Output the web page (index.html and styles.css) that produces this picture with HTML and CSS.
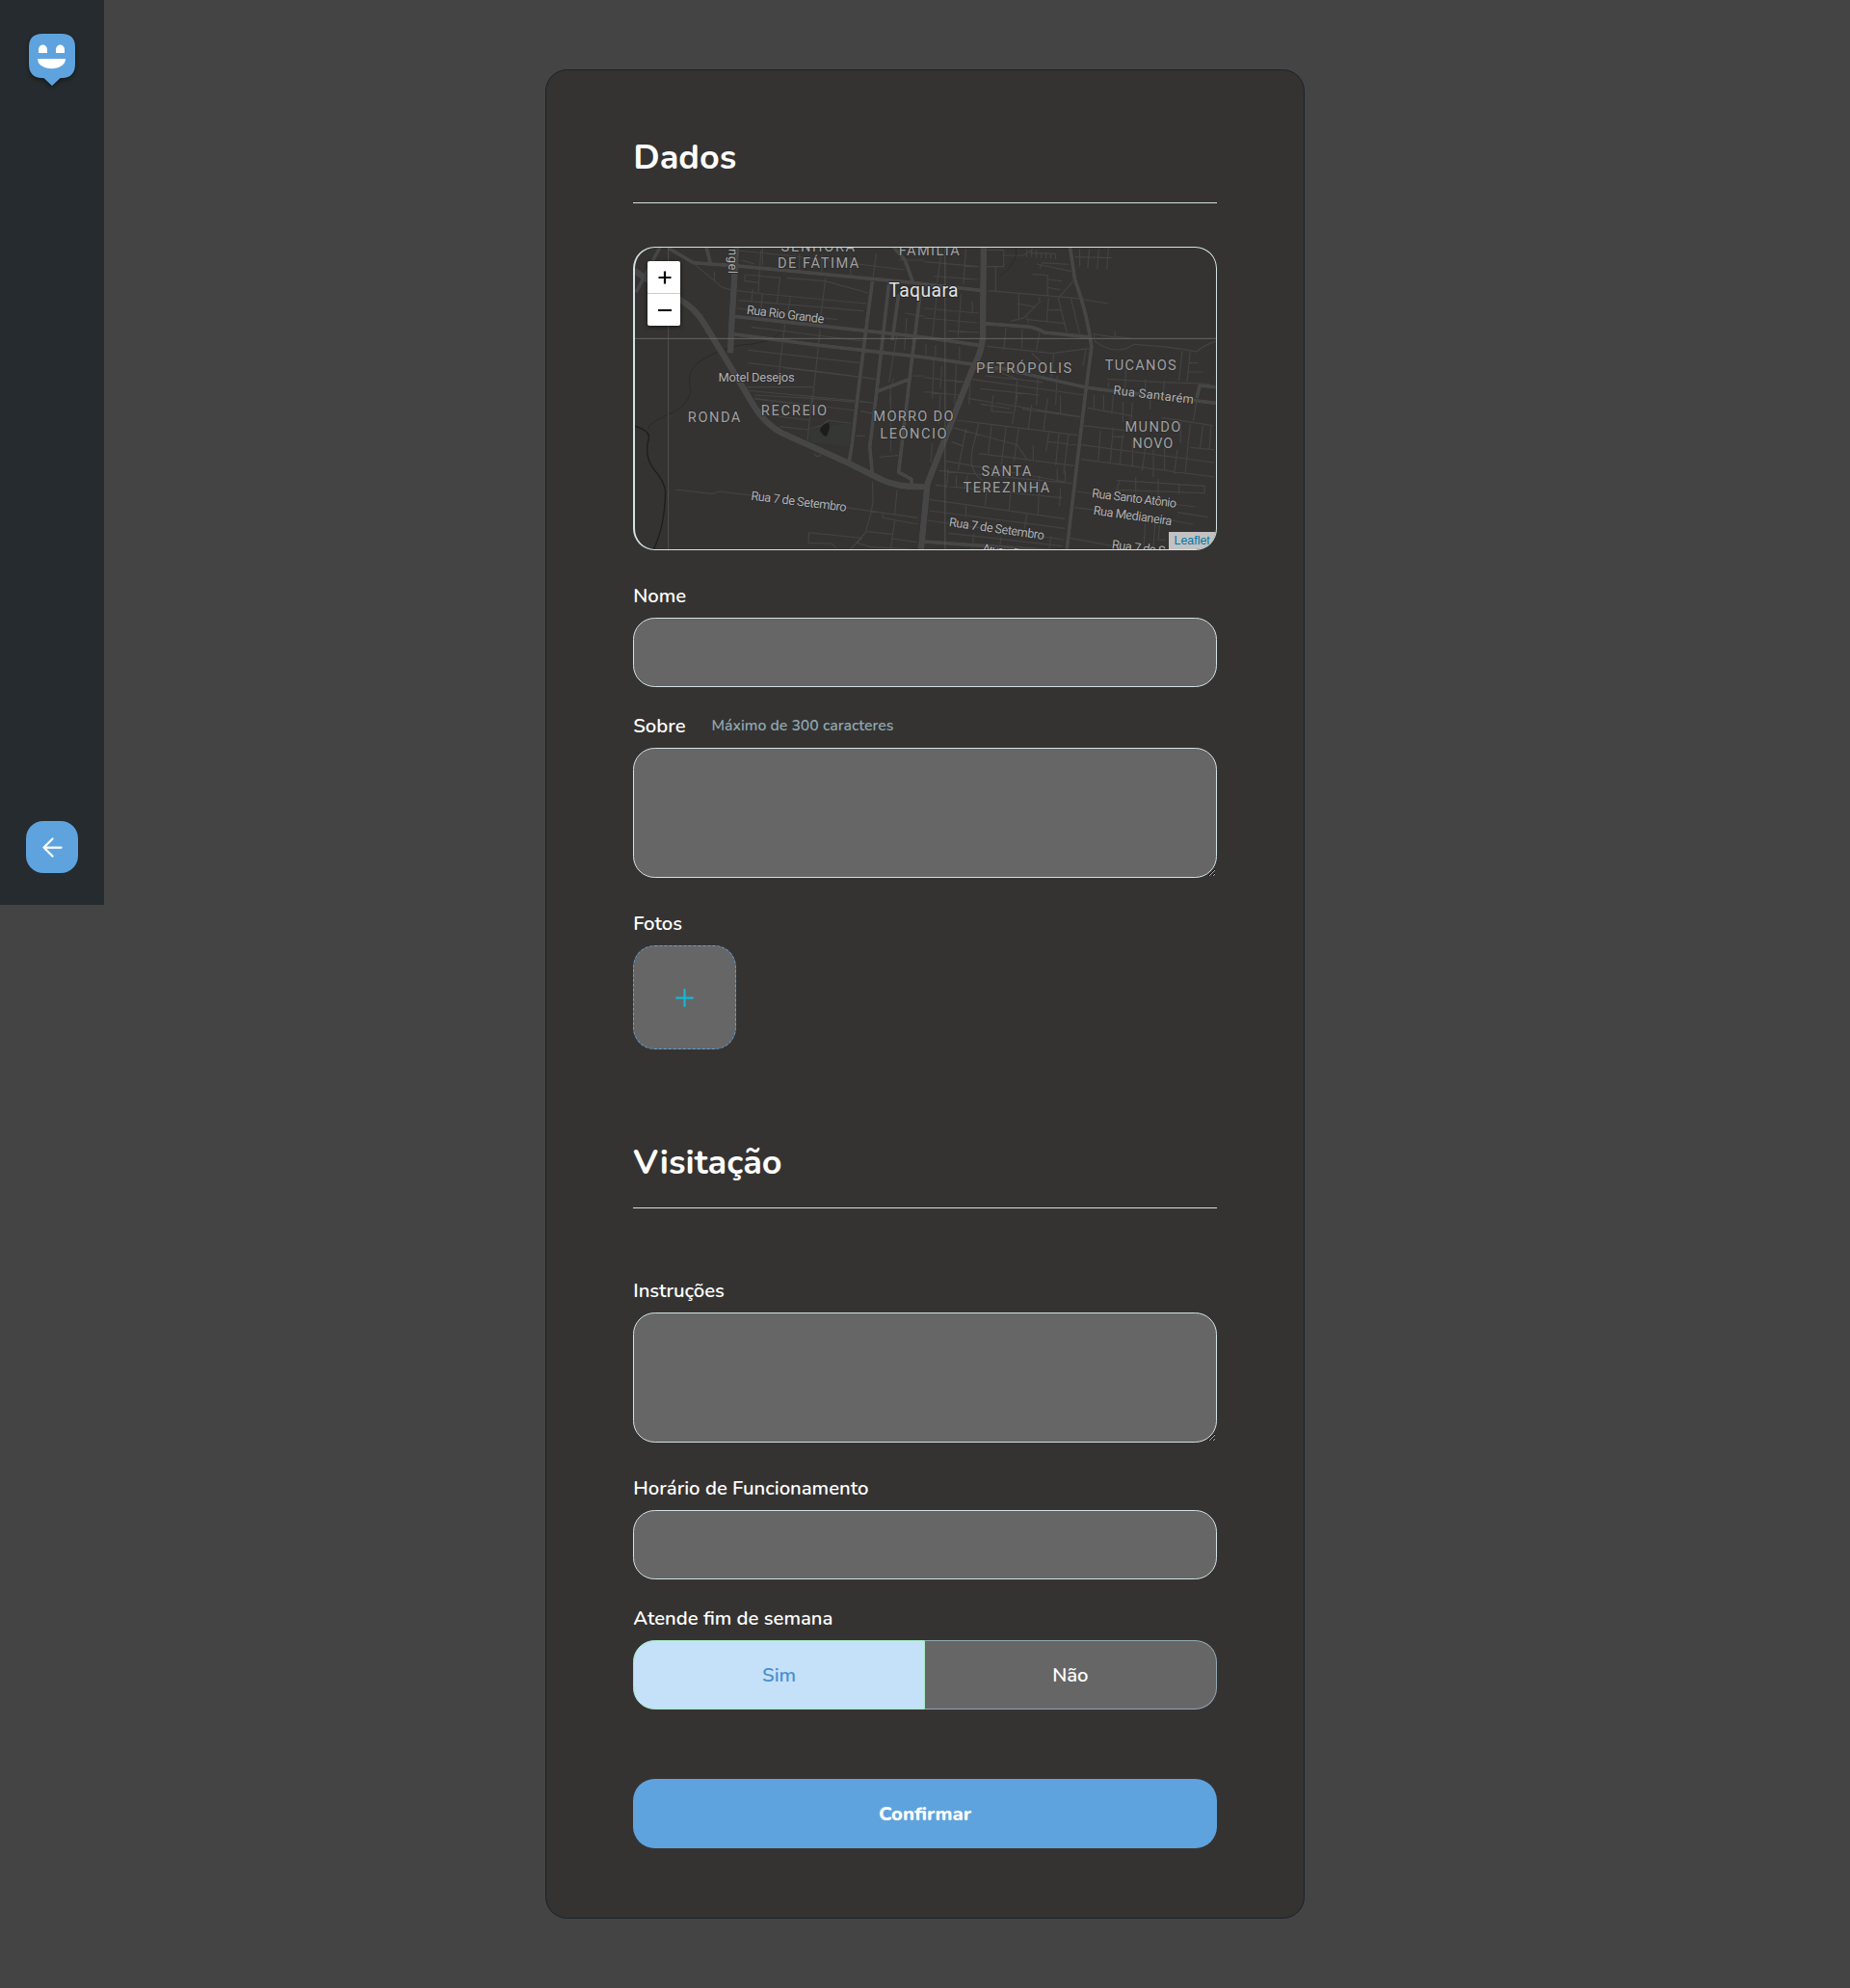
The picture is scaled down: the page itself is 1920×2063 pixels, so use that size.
FILE: index.html
```html
<!DOCTYPE html>
<html lang="pt-BR">
<head>
<meta charset="utf-8">
<title>Dados</title>
<link rel="stylesheet" href="styles.css">
</head>
<body>
<aside class="sidebar">
  <svg class="logo" width="60" height="66" viewBox="0 0 60 66">
    <path d="M20 5H40Q54 5 54 19V36Q54 51 40 51H38.500L30 59L21.500 51H20Q6 51 6 36V19Q6 5 20 5Z" fill="#5fa3de"/>
    <path d="M16 25V21.500a4.500 5 0 0 1 9 0V25ZM34 25V21.500a4.500 5 0 0 1 9 0V25Z" fill="#fff"/>
    <path d="M15 31H44C44 44.500 15 44.500 15 31Z" fill="#fff"/>
  </svg>
  <button class="back" type="button" aria-label="Voltar">
    <svg width="27" height="27" viewBox="0 0 24 24" fill="none" stroke="#fff" stroke-width="2" stroke-linecap="round" stroke-linejoin="round"><path d="M20 12H4.500M12 20L4 12L12 4"/></svg>
  </button>
</aside>
<main class="main">
<form class="card">
  <section class="section">
    <h1 class="title">Dados</h1>
    <div class="map">
      <svg class="tiles" viewBox="27 21 1812 939" preserveAspectRatio="none">
        <g class="minor">
          <path d="M210 70L300 145L335 155M275 95V125M370 105L480 115L470 195M370 105V125L415 130M420 30L412 160M425 20V75M360 60L400 72M345 30L500 45L870 90M540 40V90M610 45V100M700 50V110M780 40L770 115M345 155L430 165L750 195M350 185L740 218M345 210L660 245M395 150L390 190M425 165L420 215M500 115L620 125L755 162M622 115L605 250M512 175L505 220M390 268L740 312M495 260L475 420M605 275L580 510M380 340L730 380M380 380L590 405L780 430M375 455L585 455M370 465L740 500M400 490L520 505M490 395L780 430M875 240L868 340M845 290L820 440M835 430Q820 460 825 510M870 225L930 235M895 420H930M850 60H930"/>
          <path d="M930 65L1100 80M985 20L970 130M1060 25L1052 135M960 110L1095 120M930 210L1100 225M930 240L1095 255M970 160L955 300M1045 165L1035 300M1080 190V225M1005 280L1100 285M935 320V355M965 325V360M1040 330V370M960 370L955 490M985 390L980 460M1030 375L1025 510M1075 390L1070 510M930 425L1060 440M930 470L1040 480M1125 28H1178V80H1125M1153 80V155M1130 155L1400 178L1505 195M1178 45H1240L1270 25M1250 25V50M1265 25V50M1280 28V52M1295 35V53M1310 37V55M1325 38V56M1340 40V58M1260 38L1340 40M1280 72L1390 95M1290 85L1300 68L1380 73M1268 103L1315 107V170M1315 120L1360 125M1315 145L1355 152M1225 165V245M1220 195L1275 205M1200 250L1240 240L1290 190V175M1318 178L1312 250M1318 215H1360M1250 235L1255 255M1250 245L1370 257M1395 125L1348 178L1375 285M1388 180L1415 290M1415 25V80M1445 25L1440 85M1475 25L1470 88M1505 20L1500 90M1400 50L1515 53M1185 270L1178 340M1235 275V335M1290 285L1280 340M1125 328L1330 350L1445 335M1265 348L1295 378M1335 348L1325 430M1435 335L1425 390M1460 300V290L1525 300V280M1525 297L1575 304M1460 310Q1510 350 1560 335L1585 322Q1710 330 1780 345Q1810 320 1840 313M1735 343L1725 435M1760 345L1750 440M1755 380H1785M1755 408H1800M1500 430L1670 440L1820 445M1505 440V455M1560 400L1555 480M1620 430V480M1680 435L1675 480M1075 430L1430 480M1105 460L1290 480M1115 390L1220 430L1215 510M1345 420L1340 510M1285 420L1280 510M1120 420L1300 440"/>
          <path transform="translate(0 480)" d="M400 12L720 48M400 0L580 10L720 22M580 0L565 145M455 20V40M425 60L570 78M480 98L570 108M570 105L610 95L630 78L705 88M825 0V175M730 20L780 25M730 50L775 58M718 127H745M790 193L848 188M153 294L270 307L290 300L390 312M685 350L910 382M768 270L770 330Q765 370 745 430L700 480M845 295L838 370M800 368V382L910 402M838 392L825 480M750 425L830 433M830 447L905 458M655 475L640 462L568 460L570 428L735 445L720 460L760 472L890 480M585 180Q595 200 607 184"/>
          <path transform="translate(930 480)" d="M100 78L480 125M135 10L490 68M175 28L270 42M305 43L485 68M215 0L210 50L275 55M290 0L275 90M335 30L325 105M385 10L372 110M425 0V60M85 100L290 155L320 200M170 88L155 150Q130 230 180 265M130 105L105 235M210 92L200 180M255 100L240 220M295 100L280 205M340 155V205M390 110L380 175M420 120L410 220M450 120L435 245M85 145L125 160M385 145L475 155M170 182L470 220M65 205L440 270M45 235L460 275M35 280L430 320M415 230V270M440 235V270M425 290L422 345M100 250V290M75 230L70 290M135 250L125 290M195 290L190 345M270 295L265 360M360 250L355 370M320 300L350 270M15 325L440 385M15 360L440 415M10 390L435 450M130 340V380M320 370L310 430M75 430L430 470M155 430L150 480M240 440L235 480M395 440L390 480M495 95L625 110M490 155L906 210M490 200L906 255M550 110L543 205M590 100L580 215M620 120L610 220M650 140V225M690 165L680 235M715 170V255M750 165V235M790 170L780 245M830 90L815 240M870 95L860 170M895 95L890 170M590 130H625M830 163L905 170M600 265L875 283V305L600 295L610 265M660 255V320M730 260V325M795 275V310M475 300L845 348M470 350L590 365M655 370L840 402M790 365L885 380M455 445L590 470M690 400L685 470M720 400L715 475M735 405L730 450L755 452M510 40L650 65M530 0V40M560 0V45M590 0L585 60M620 20V85M650 20L645 90M705 0V45M850 20L840 80M740 70L900 95M50 0L45 90M25 150L20 210M800 80V150"/>
        </g>
        <g class="water">
          <path d="M480 285Q450 320 350 325Q220 360 200 410Q195 430 200 470Q190 520 120 545Q60 575 70 585M1215 20Q1230 60 1165 112"/>
          <path class="river" d="M24 576Q75 590 70 615Q55 670 85 710Q120 750 122 780Q120 890 85 960"/>
        </g>
        <path d="M573 582L703 568L697 640L573 628Z" fill="#353734"/>
        <path d="M604 590Q610 568 632 566Q638 580 626 607Q617 612 604 590Z" fill="#1c1d1c"/>
        <g class="major">
          <path d="M0 75L65 120L170 185Q215 210 245 260L330 400L390 500Q430 570 490 600L690 690L800 745Q850 768 930 765" stroke-width="20"/>
          <path d="M343 20L338 105L327 290L325 350" stroke-width="20"/>
          <path d="M1115 20L1113 300Q1110 345 1080 400L1040 500L940 755L920 960" stroke-width="20"/>
          <path d="M130 22L210 68L350 78L890 130L1115 155M250 20L262 68M105 20L30 160M335 235L930 300L1100 325M335 290L600 325L930 362L1085 385L1185 400L1430 455L1500 465L1840 505M1780 490L1790 450L1840 455M768 125L745 300L720 500L705 630L695 690M820 130L780 480L760 640L768 730M918 160L890 380L850 720L890 742V760M780 470L885 430M835 20L870 60L895 130M1120 257L1260 268Q1280 272 1305 285L1450 300M1385 20L1400 120Q1440 230 1452 330L1430 500L1375 960M850 165L830 310M920 935L1400 970"/>
        </g>
        <path d="M24 304H1840" stroke="#666" stroke-width="3" fill="none"/>
        <path d="M131 21V970M995 21V970" stroke="#5a5a5a" stroke-width="3" fill="none" opacity=".7"/>
        <g class="labels area">
          <text x="483" y="34" textLength="230">SENHORA</text>
          <text x="472" y="84" textLength="254">DE FÁTIMA</text>
          <text x="850" y="46" textLength="190">FAMÍLIA</text>
          <text x="1092" y="412" textLength="298">PETRÓPOLIS</text>
          <text x="1494" y="402" textLength="222">TUCANOS</text>
          <text x="192" y="564" textLength="164">RONDA</text>
          <text x="420" y="544" textLength="206">RECREIO</text>
          <text x="771" y="562" textLength="250">MORRO DO</text>
          <text x="792" y="614" textLength="208">LEÔNCIO</text>
          <text x="1556" y="595" textLength="174">MUNDO</text>
          <text x="1580" y="646" textLength="126">NOVO</text>
          <text x="1108" y="733" textLength="156">SANTA</text>
          <text x="1051" y="784" textLength="270">TEREZINHA</text>
        </g>
        <g class="labels road">
          <text transform="translate(320 24) rotate(91)" textLength="78">ngel</text>
          <text transform="translate(374 227) rotate(7)" textLength="244">Rua Rio Grande</text>
          <text x="287" y="438" textLength="238">Motel Desejos</text>
          <text transform="translate(1519 477) rotate(7)" textLength="252">Rua Santarém</text>
          <text transform="translate(388 806) rotate(7)" textLength="300">Rua 7 de Setembro</text>
          <text transform="translate(1006 888) rotate(8)" textLength="300">Rua 7 de Setembro</text>
          <text transform="translate(1452 798) rotate(7)" textLength="266">Rua Santo Atônio</text>
          <text transform="translate(1456 851) rotate(8)" textLength="248">Rua Medianeira</text>
          <text transform="translate(1514 958) rotate(7)" textLength="168">Rua 7 de S</text>
          <text transform="translate(1110 970) rotate(8)" textLength="120">Aruamãi</text>
        </g>
        <text class="city" x="819" y="174" textLength="217">Taquara</text>
      </svg>
      <div class="zoom">
        <button type="button" aria-label="Aproximar"><svg width="14" height="14" viewBox="0 0 14 14"><path d="M7 .5V13.500M.5 7H13.500" stroke="#000" stroke-width="2.200"/></svg></button>
        <button type="button" aria-label="Afastar"><svg width="14" height="14" viewBox="0 0 14 14"><path d="M0 7H14" stroke="#000" stroke-width="2.200"/></svg></button>
      </div>
      <a class="credit">Leaflet</a>
    </div>
    <div class="field nome">
      <label class="label">Nome</label>
      <input class="control">
    </div>
    <div class="field">
      <label class="label">Sobre<small class="hint">Máximo de 300 caracteres</small></label>
      <textarea class="control area-input"></textarea>
    </div>
    <div class="field fotos">
      <label class="label">Fotos</label>
      <button class="add" type="button" aria-label="Adicionar foto">
        <svg width="27" height="27" viewBox="0 0 24 24" stroke="#15b6d6" stroke-width="2" stroke-linecap="round"><path d="M12 4.500V19.500M4.500 12H19.500"/></svg>
      </button>
    </div>
  </section>
  <section class="section visit">
    <h1 class="title">Visitação</h1>
    <div class="field instr">
      <label class="label">Instruções</label>
      <textarea class="control area-input"></textarea>
    </div>
    <div class="field horario">
      <label class="label">Horário de Funcionamento</label>
      <input class="control">
    </div>
    <div class="field">
      <label class="label">Atende fim de semana</label>
      <div class="choice">
        <button class="option active" type="button">Sim</button>
        <button class="option" type="button">Não</button>
      </div>
    </div>
  </section>
  <button class="confirm" type="button">Confirmar</button>
</form>
</main>
</body>
</html>
```
FILE: styles.css
```css
* { box-sizing: border-box; margin: 0; padding: 0; }
body {
  display: grid;
  grid-template-columns: 108px 1fr 108px;
  min-height: 2063px;
  background: #444;
  color: #fff;
  font-family: Nunito, Lato, sans-serif;
}
button, input, textarea { font: inherit; outline: none; }
.sidebar {
  height: 939px;
  padding: 30px 24px 33px;
  background: #252b2e;
  display: flex;
  flex-direction: column;
  align-items: center;
  justify-content: space-between;
}
.logo { filter: drop-shadow(0 2px 2px rgba(0, 0, 0, .45)); }
.back {
  width: 54px;
  height: 54px;
  border: 0;
  border-radius: 18px;
  background: #5fa3de;
  display: flex;
  align-items: center;
  justify-content: center;
}
.main { display: flex; justify-content: center; align-items: flex-start; padding-top: 72px; }
.card {
  width: 787.5px;
  height: 1919px;
  padding: 66px 90px 71px;
  background: #353331;
  border: 1px solid #1a202c;
  border-radius: 22.5px;
}
.title {
  height: 72px;
  line-height: 49px;
  font-size: 36px;
  font-weight: 700;
  border-bottom: 1px solid #d3e2e5;
}
.map {
  position: relative;
  height: 315px;
  margin-top: 45px;
  border: 1px solid #d3e2e5;
  border-left-width: 2px;
  border-radius: 22.5px;
  overflow: hidden;
  background: #343332;
}
.tiles { display: block; width: 100%; height: 100%; font-family: Roboto, sans-serif; }
.minor { fill: none; stroke: #434343; stroke-width: 3.5; }
.water { fill: none; stroke: #252626; stroke-width: 2; }
.river { stroke: #1c1e1e; stroke-width: 4; }
.major {
  fill: none;
  stroke: #464646;
  stroke-width: 12;
  stroke-linejoin: round;
  filter: drop-shadow(0 0 2px #222);
}
.labels { fill: #b0b0b0; paint-order: stroke; stroke: #2c2b2b; stroke-width: 5; }
.area { font-size: 44px; fill: #a0a0a0; }
.road { font-size: 39px; }
.city { font-size: 58px; fill: #e2e2e2; paint-order: stroke; stroke: #292929; stroke-width: 6; }
.zoom {
  position: absolute;
  left: 13px;
  top: 14px;
  width: 34px;
  height: 67px;
  border-radius: 2px;
  box-shadow: 0 1px 4px rgba(0, 0, 0, .65);
  overflow: hidden;
}
.zoom button {
  display: flex;
  align-items: center;
  justify-content: center;
  width: 34px;
  height: 33px;
  padding-left: 2px;
  border: 0;
  background: #fff;
}
.zoom button:first-child { height: 34px; border-bottom: 1px solid #ccc; }
.credit {
  position: absolute;
  right: 0;
  bottom: 0;
  padding: 0 6px;
  background: rgba(255, 255, 255, .7);
  color: #0078a8;
  font: 12.4px/18px "Liberation Sans", sans-serif;
}
.field { margin-top: 27px; }
.nome { margin-top: 34px; }
.fotos { margin-top: 34px; }
.label {
  display: flex;
  align-items: center;
  height: 27px;
  margin-bottom: 9px;
  font-size: 20.25px;
  font-weight: 600;
}
.hint { margin: -1px 0 0 27px; font-size: 15.75px; font-weight: 600; color: #8fa7b2; }
.control {
  display: block;
  width: 100%;
  height: 72px;
  border: 1px solid #d3e2e5;
  border-radius: 22.5px;
  background: #666;
}
.area-input { height: 135px; resize: vertical; }
.add {
  width: 107px;
  height: 108px;
  border: 1px dashed #5fa3de;
  border-radius: 22.5px;
  background: #666;
  display: flex;
  align-items: center;
  justify-content: center;
}
.visit { margin-top: 93px; }
.instr { margin-top: 72px; }
.horario { margin-top: 34px; }
.choice { display: grid; grid-template-columns: 1fr 1fr; height: 72px; }
.option {
  border: 1px solid #8fa7b2;
  border-left: 0;
  border-radius: 0 22.5px 22.5px 0;
  background: #666;
  color: #fff;
  font-size: 20.25px;
  font-weight: 600;
}
.active {
  border: 1px solid #a1e9c5;
  border-radius: 22.5px 0 0 22.5px;
  background: #c5e1fa;
  color: #4a90d0;
}
.confirm {
  display: block;
  width: 100%;
  height: 72px;
  margin-top: 72px;
  border: 0;
  border-radius: 22.5px;
  background: #5fa3de;
  color: #fff;
  font-size: 20.25px;
  font-weight: 800;
}
```
